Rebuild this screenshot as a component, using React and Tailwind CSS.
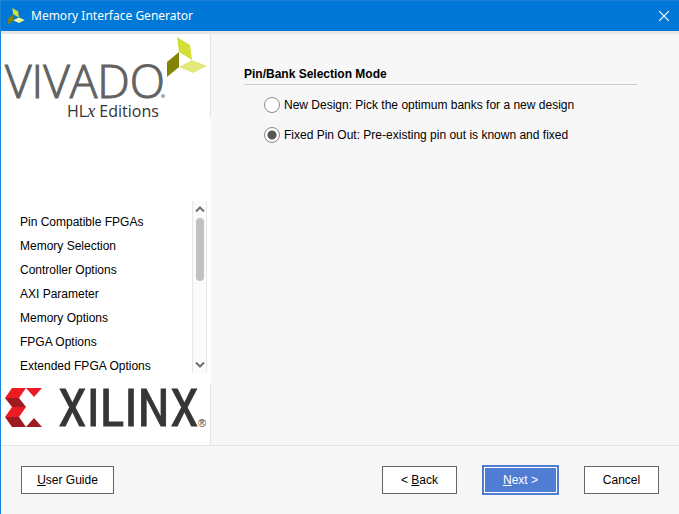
import { useState } from "react";

const steps = [
  "Pin Compatible FPGAs",
  "Memory Selection",
  "Controller Options",
  "AXI Parameter",
  "Memory Options",
  "FPGA Options",
  "Extended FPGA Options",
];

const modes = [
  { id: "new", label: "New Design: Pick the optimum banks for a new design" },
  { id: "fixed", label: "Fixed Pin Out: Pre-existing pin out is known and fixed" },
];

function Leaves({ className }) {
  return (
    <svg className={className} viewBox="0 0 40 41" aria-hidden="true">
      <path d="M10 0 24 8.500 26 23 12 15Z" fill="#d3df37" />
      <path d="M12 15V30L0 40V25.500Z" fill="#828405" />
      <path d="M12 29.500 26 23 40 29 26 36Z" fill="#eef3a0" />
    </svg>
  );
}

function VivadoLogo() {
  return (
    <svg className="block h-[84px] w-[209px] overflow-visible" viewBox="0 0 209 84" role="img" aria-label="Vivado HLx Editions">
      <text x="4" y="64" fontSize="46" fontWeight="300" fill="#626262" stroke="#626262" strokeWidth="1" className="font-['Open_Sans','Noto_Sans',sans-serif]">VIVADO</text>
      <circle cx="162" cy="62" r="2" fill="#aaaaaa" />
      <text x="66" y="83" fontSize="16" fill="#333333" className="font-['Open_Sans','Noto_Sans',sans-serif]">
        HL<tspan fontStyle="italic" fontSize="18" className="font-['Liberation_Serif',serif]">x</tspan> Editions
      </text>
      <path d="M176 3 189 11 191 26 178 18Z" fill="#d3df37" />
      <path d="M178 18V33L166 43V28Z" fill="#828405" />
      <path d="M178 33 191 26 206 32 192 39Z" fill="#e2e97a" />
    </svg>
  );
}

function XilinxLogo() {
  return (
    <svg className="block h-[60px] w-[209px] overflow-visible" viewBox="0 0 209 60" role="img" aria-label="Xilinx">
      <path d="M11 3H25L18 13H4Z" fill="#ed1c24" />
      <path d="M4 13H18L25 22H11Z" fill="#9e1b20" />
      <path d="M11 22H25L18 32H4Z" fill="#ed1c24" />
      <path d="M4 32H18L25 42H11Z" fill="#9e1b20" />
      <path d="M25 3H41L33 12Z" fill="#ed1c24" />
      <path d="M33 33 41 42H25Z" fill="#9e1b20" />
      <text x="57" y="41" fontSize="52" fill="#373535" stroke="#373535" strokeWidth="0.800" className="font-['Liberation_Sans_Narrow','Roboto_Condensed','Open_Sans',sans-serif]">XILINX</text>
      <text x="197" y="42" fontSize="11" fill="#373535" className="font-['Liberation_Sans',sans-serif]">®</text>
    </svg>
  );
}

function Chevron({ up }) {
  return (
    <svg className="h-[6px] w-[10px]" viewBox="0 0 10 6" fill="none" stroke="#707070" strokeWidth="2" aria-hidden="true">
      <path d={up ? "M1 5.500 5 1.500 9 5.500" : "M1 0.500 5 4.500 9 0.500"} />
    </svg>
  );
}

const plainButton = "h-7 border border-[#666666] bg-white";

export default function App() {
  const [mode, setMode] = useState("fixed");
  return (
    <div className="flex min-h-screen flex-col border-l border-[#1a82d9] bg-[#f7f7f7] font-['Liberation_Sans',Arial,sans-serif] text-[12px] leading-4 text-black">
      <header className="flex h-[31px] items-center border-t border-[#1a82d9] bg-[#0078d7] px-[7px] text-white">
        <Leaves className="h-[17px] w-[17px]" />
        <h1 className="ml-1.5 flex-1 font-['Noto_Sans','Open_Sans',sans-serif] text-[12px]">Memory Interface Generator</h1>
        <button type="button" aria-label="Close" className="flex h-4 w-4 items-center justify-center">
          <svg className="h-[10px] w-[10px]" viewBox="0 0 10 10" stroke="currentColor" strokeWidth="1.200" aria-hidden="true">
            <path d="M0 0 10 10M10 0 0 10" />
          </svg>
        </button>
      </header>

      <div className="flex flex-1 border-t-[3px] border-[#e6e6e6]">
        <aside className="flex w-[210px] shrink-0 flex-col bg-white">
          <div className="border-r border-[#e4e4e4]">
            <VivadoLogo />
          </div>
          <nav aria-label="Steps" className="mt-auto mb-3 flex pr-1">
            <ul className="flex-1 pt-2 pl-[19px]">
              {steps.map((s) => (
                <li key={s} className="h-6 pt-[5px] whitespace-nowrap last:h-5">{s}</li>
              ))}
            </ul>
            <div className="flex w-[15px] flex-col items-center border-x border-[#e8e8e8] bg-[#fbfbfb]">
              <button type="button" aria-label="Scroll up" className="flex h-4 w-full items-center justify-center">
                <Chevron up />
              </button>
              <div className="mt-px h-[63px] w-2 rounded-full bg-[#c1c1c1]" />
              <button type="button" aria-label="Scroll down" className="mt-auto flex h-4 w-full items-center justify-center">
                <Chevron />
              </button>
            </div>
          </nav>
          <div className="border-r border-[#e4e4e4]">
            <XilinxLogo />
          </div>
        </aside>

        <main className="flex-1 pt-8 pr-[42px] pl-[33px]">
          <fieldset>
            <legend className="w-full border-b border-[#cccccc] pb-[2px] font-bold">Pin/Bank Selection Mode</legend>
            <div className="flex flex-col gap-3.5 pt-3 pl-5">
              {modes.map((m) => (
                <label key={m.id} className="flex items-center gap-1">
                  <input
                    type="radio"
                    name="mode"
                    checked={mode === m.id}
                    onChange={() => setMode(m.id)}
                    className="h-4 w-4 shrink-0 appearance-none rounded-full border border-[#8a8a8a] bg-white checked:bg-[radial-gradient(circle,#555555_4px,#ffffff_5px)]"
                  />
                  <span>{m.label}</span>
                </label>
              ))}
            </div>
          </fieldset>
        </main>
      </div>

      <footer className="flex items-center border-t border-[#e4e4e4] px-5 py-[19px]">
        <button type="button" className={`${plainButton} w-[93px]`}><u>U</u>ser Guide</button>
        <div className="ml-auto flex items-center gap-[25px]">
          <button type="button" className={`${plainButton} w-[75px]`}>&lt; <u>B</u>ack</button>
          <button type="button" className="h-[30px] w-[77px] border-2 border-[#4f7dd3] bg-[#4f7dd3] text-white ring-1 ring-white ring-inset"><u>N</u>ext &gt;</button>
          <button type="button" className={`${plainButton} w-[75px]`}>Cancel</button>
        </div>
      </footer>
    </div>
  );
}
